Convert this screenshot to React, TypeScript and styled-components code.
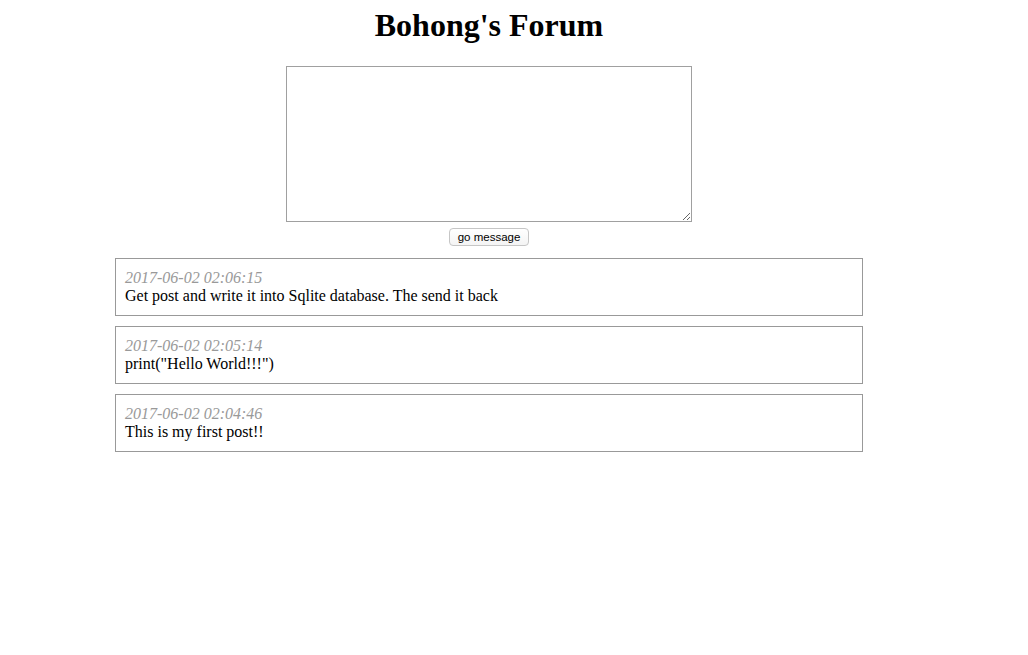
import React from "react";
import styled, { createGlobalStyle } from "styled-components";

const Global = createGlobalStyle`
  html, body { background: #fff; }
  body {
    margin: 8px;
    font-family: "Liberation Serif", "Times New Roman", serif;
    font-size: 16px;
    color: #000;
  }
`;

const Page = styled.div`
  width: 962px;
  display: flex;
  flex-direction: column;
  align-items: center;
`;

const Title = styled.h1`
  margin: -1px 0 22px;
  font-size: 32px;
  font-weight: bold;
  line-height: 37px;
  text-align: center;
`;

const Form = styled.form`
  display: flex;
  flex-direction: column;
  align-items: center;
  gap: 6px;
  margin-bottom: 12px;
`;

const TextArea = styled.textarea`
  width: 400px;
  height: 150px;
  padding: 2px;
  margin: 0;
  border: 1px solid #a0a0a0;
  font-family: "Liberation Mono", monospace;
  font-size: 13px;
  resize: both;
  display: block;
`;

const Button = styled.button`
  width: 80px;
  height: 18px;
  padding: 0 6px;
  margin: 0;
  border: 1px solid #c6c6c6;
  border-radius: 4px;
  background: linear-gradient(#ffffff, #f4f4f4);
  font-family: "Liberation Sans", Arial, sans-serif;
  font-size: 11.5px;
  line-height: 14px;
  color: #000;
  display: flex;
  align-items: center;
  justify-content: center;
`;

const List = styled.div`
  display: flex;
  flex-direction: column;
  gap: 10px;
`;

const Card = styled.div`
  width: 728px;
  padding: 10px 9px 10px 9px;
  border: 1px solid #999;
  line-height: 18px;
`;

const DateLine = styled.div`
  font-style: italic;
  color: #999;
`;

const Body = styled.div`
  color: #000;
`;

const posts = [
  { date: "2017-06-02 02:06:15", text: "Get post and write it into Sqlite database. The send it back" },
  { date: "2017-06-02 02:05:14", text: 'print("Hello World!!!")' },
  { date: "2017-06-02 02:04:46", text: "This is my first post!!" },
];

export default function App() {
  return (
    <>
      <Global />
      <Page>
        <Title>Bohong's Forum</Title>
        <Form onSubmit={(e) => e.preventDefault()}>
          <TextArea />
          <Button type="submit">go message</Button>
        </Form>
        <List>
          {posts.map((p) => (
            <Card key={p.date}>
              <DateLine>{p.date}</DateLine>
              <Body>{p.text}</Body>
            </Card>
          ))}
        </List>
      </Page>
    </>
  );
}
